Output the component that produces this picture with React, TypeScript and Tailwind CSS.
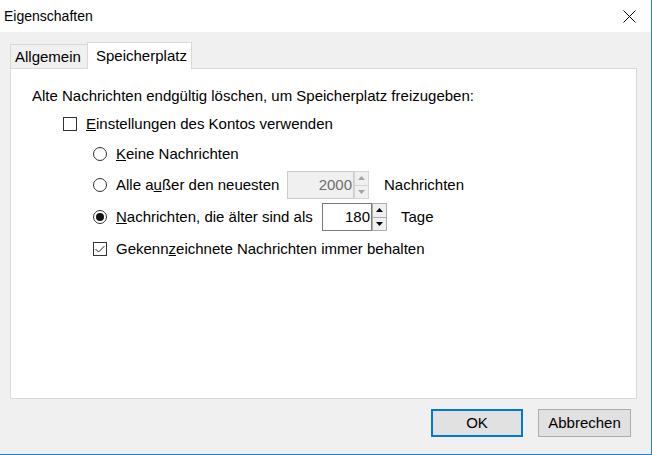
import type { ReactNode } from "react";

// Windows-Dialog "Eigenschaften" – Reiter Speicherplatz
const font = "font-['Liberation_Sans',Arial,sans-serif]";

function Spin({ disabled }: { disabled?: boolean }) {
  const tri = disabled ? "#a3a3a3" : "#000";
  const border = disabled ? "border-[#d5d5d5]" : "border-[#adadad]";
  return (
    <div className="flex flex-col w-[15px] h-full">
      <div className={`flex-1 flex items-center justify-center border ${border} bg-[#f0f0f0]`}>
        <svg width="7" height="4" viewBox="0 0 7 4">
          <polygon points="0,4 7,4 3.5,0" fill={tri} />
        </svg>
      </div>
      <div className={`flex-1 flex items-center justify-center border border-t-0 ${border} bg-[#f0f0f0]`}>
        <svg width="7" height="4" viewBox="0 0 7 4">
          <polygon points="0,0 7,0 3.5,4" fill={tri} />
        </svg>
      </div>
    </div>
  );
}

function Radio({ checked }: { checked?: boolean }) {
  return (
    <div className="w-[14px] h-[14px] rounded-full border border-[#333] bg-white flex items-center justify-center shrink-0">
      {checked && <div className="w-[8px] h-[8px] rounded-full bg-[#111]" />}
    </div>
  );
}

function Check({ checked }: { checked?: boolean }) {
  return (
    <div className="w-[14px] h-[14px] border border-[#333] bg-white flex items-center justify-center shrink-0">
      {checked && (
        <svg width="12" height="12" viewBox="0 0 12 12">
          <polyline points="1.5,6 4.5,9 10.5,3" fill="none" stroke="#222" strokeWidth="1" />
        </svg>
      )}
    </div>
  );
}

function Row({ children, className = "" }: { children: ReactNode; className?: string }) {
  return <div className={`flex items-center h-[28px] ${className}`}>{children}</div>;
}

export default function App() {
  return (
    <div className={`w-[652px] h-[455px] flex flex-col bg-[#f0f0f0] border-r border-b border-[#1883d7] text-[15px] text-black ${font}`}>
      {/* Titelleiste */}
      <div className="h-[32px] bg-white flex items-center justify-between pl-[4px] pr-[15px] text-[14px]">
        <span>Eigenschaften</span>
        <svg width="13" height="13" viewBox="0 0 13 13">
          <path d="M0.5 0.5 L12.5 12.5 M12.5 0.5 L0.5 12.5" stroke="#000" strokeWidth="1" />
        </svg>
      </div>

      <div className="flex-1 flex flex-col px-[10px] pt-[10px]">
        {/* Reiter */}
        <div className="flex items-end h-[26px]">
          <div className="h-[24px] w-[77px] border border-b-0 border-r-0 border-[#d9d9d9] flex items-center pl-[4px] pt-[2px]">
            Allgemein
          </div>
          <div className="h-[27px] w-[105px] bg-white border border-b-0 border-[#d9d9d9] flex items-center pl-[8px] -mb-px relative z-10">
            Speicherplatz
          </div>
        </div>

        {/* Inhalt */}
        <div className="w-[627px] h-[331px] bg-white border border-[#d9d9d9] pl-[21px] pt-[13px]">
          <Row>Alte Nachrichten endgültig löschen, um Speicherplatz freizugeben:</Row>
          <Row className="pl-[31px]">
            <Check />
            <span className="ml-[9px]"><u>E</u>instellungen des Kontos verwenden</span>
          </Row>
          <Row className="pl-[61px] mt-[2px]">
            <Radio />
            <span className="ml-[9px]"><u>K</u>eine Nachrichten</span>
          </Row>
          <Row className="pl-[61px] mt-[3px]">
            <Radio />
            <span className="ml-[9px] w-[171px]">Alle a<u>u</u>ßer den neuesten</span>
            <div className="flex h-[28px]">
              <div className="w-[67px] h-full border border-[#cccccc] bg-[#f0f0f0] flex items-center justify-end pr-[1px] text-[#6d6d6d]">
                2000
              </div>
              <Spin disabled />
            </div>
            <span className="ml-[15px]">Nachrichten</span>
          </Row>
          <Row className="pl-[61px] mt-[4px]">
            <Radio checked />
            <span className="ml-[9px] w-[206px]"><u>N</u>achrichten, die älter sind als</span>
            <div className="flex h-[28px]">
              <div className="w-[50px] h-full border border-[#7a7a7a] bg-white flex items-center justify-end pr-[1px]">
                180
              </div>
              <Spin />
            </div>
            <span className="ml-[14px]">Tage</span>
          </Row>
          <Row className="pl-[61px] mt-[4px]">
            <Check checked />
            <span className="ml-[9px]">Gekenn<u>z</u>eichnete Nachrichten immer behalten</span>
          </Row>
        </div>

        {/* Schaltflächen */}
        <div className="flex justify-end gap-[15px] mt-[10px] pr-[10px]">
          <button className="w-[92px] h-[28px] bg-[#e1e1e1] border-2 border-[#0078d7]">OK</button>
          <button className="w-[93px] h-[28px] bg-[#e1e1e1] border border-[#adadad]">Abbrechen</button>
        </div>
      </div>
    </div>
  );
}
